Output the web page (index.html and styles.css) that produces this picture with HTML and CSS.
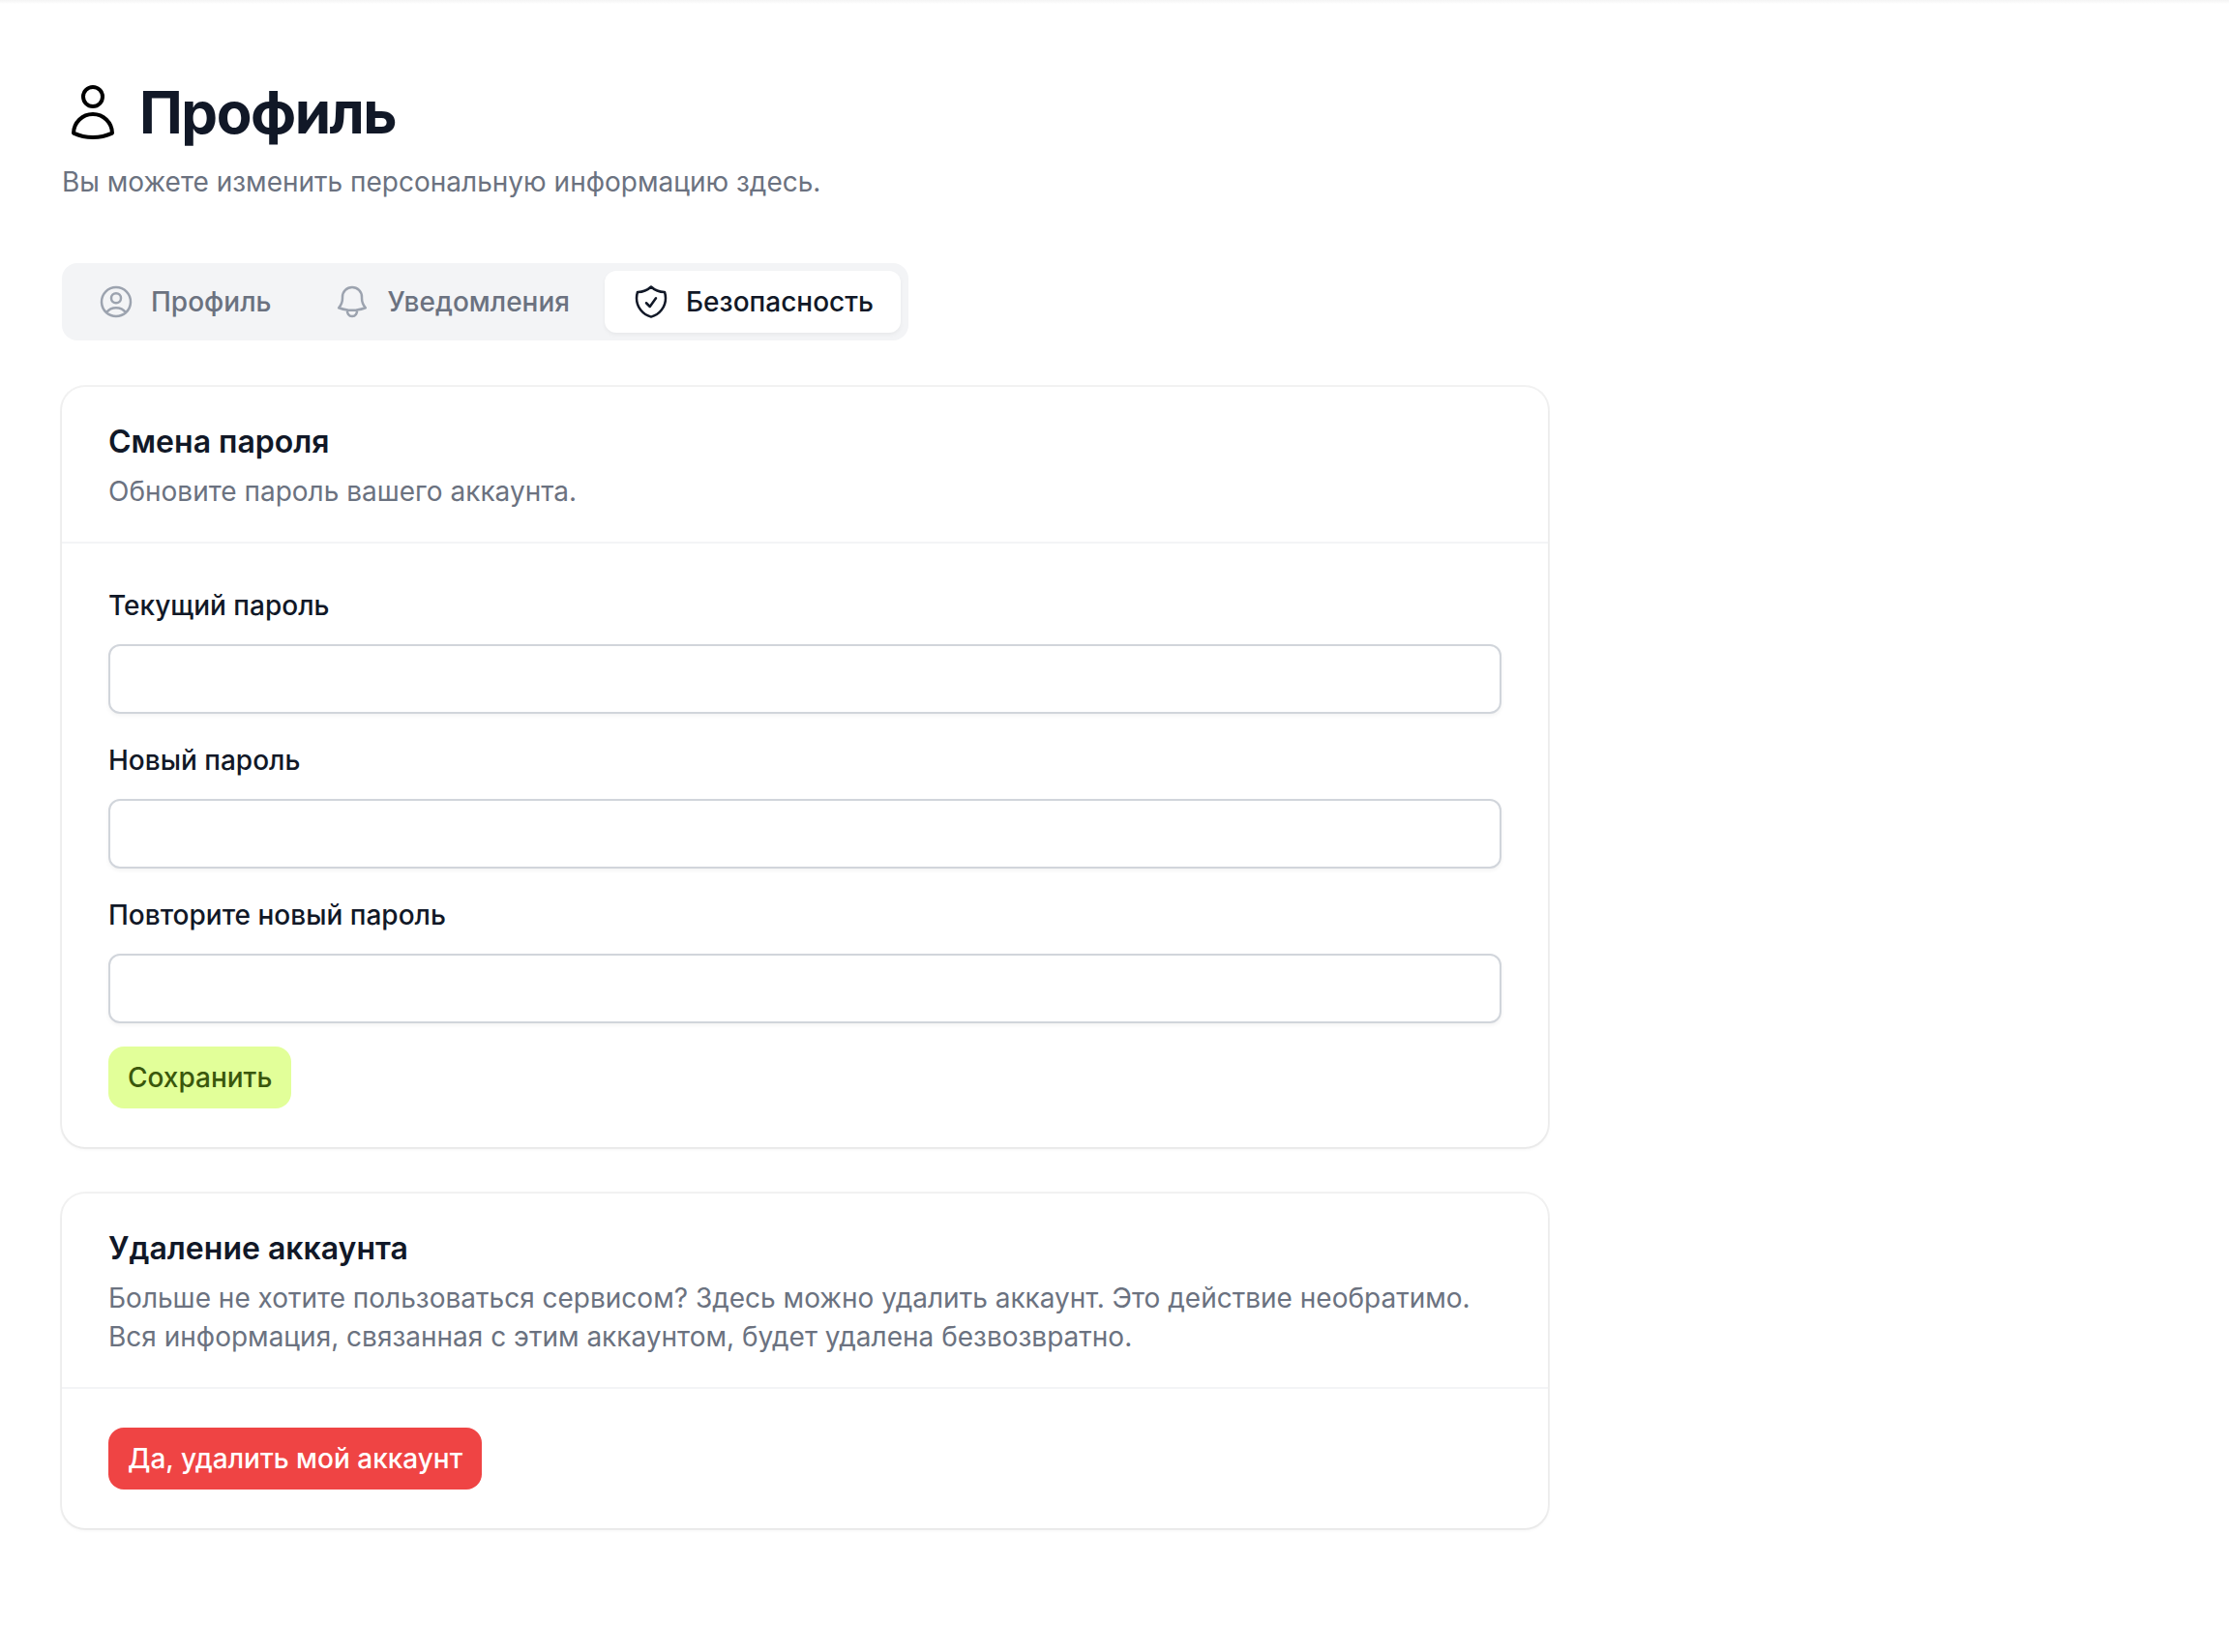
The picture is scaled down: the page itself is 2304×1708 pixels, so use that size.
FILE: index.html
```html
<!DOCTYPE html>
<html lang="ru">
<head>
  <meta charset="UTF-8" />
  <meta name="viewport" content="width=device-width, initial-scale=1.0"/>
  <title>Профиль</title>
  <link rel="stylesheet" href="styles.css">
</head>
<body>
  <div class="top-line"></div>

  <main class="page">
    <header class="page-header">
      <div class="page-title">
        <svg class="title-icon" viewBox="0 0 24 24" aria-hidden="true">
          <path d="M15.75 6a3.75 3.75 0 11-7.5 0 3.75 3.75 0 017.5 0zM4.501 20.118a7.5 7.5 0 0114.998 0A17.933 17.933 0 0112 21.75c-2.676 0-5.216-.584-7.499-1.632z"/>
        </svg>
        <h1>Профиль</h1>
      </div>
      <p class="muted">Вы можете изменить персональную информацию здесь.</p>
    </header>

    <nav class="tabs">
      <a href="#profile" class="tab">
        <svg viewBox="0 0 24 24" aria-hidden="true">
          <path d="M17.982 18.725A7.488 7.488 0 0012 15.75a7.488 7.488 0 00-5.982 2.975m11.963 0a9 9 0 10-11.963 0m11.963 0A8.966 8.966 0 0112 21a8.966 8.966 0 01-5.982-2.275M15 9.75a3 3 0 11-6 0 3 3 0 016 0z"/>
        </svg>
        <span>Профиль</span>
      </a>
      <a href="#notifications" class="tab">
        <svg viewBox="0 0 24 24" aria-hidden="true">
          <path d="M14.857 17.082a23.848 23.848 0 005.454-1.31A8.967 8.967 0 0118 9.75V9A6 6 0 006 9v.75a8.967 8.967 0 01-2.312 6.022c1.733.64 3.56 1.085 5.455 1.31m5.714 0a24.255 24.255 0 01-5.714 0m5.714 0a3 3 0 11-5.714 0"/>
        </svg>
        <span>Уведомления</span>
      </a>
      <a href="#security" class="tab active" aria-current="page">
        <svg viewBox="0 0 24 24" aria-hidden="true">
          <path d="M9 12.75L11.25 15 15 9.75m-3-7.036A11.959 11.959 0 013.598 6 11.99 11.99 0 003 9.749c0 5.592 3.824 10.29 9 11.623 5.176-1.332 9-6.03 9-11.622 0-1.31-.21-2.571-.598-3.751h-.152c-3.196 0-6.1-1.248-8.25-3.285z"/>
        </svg>
        <span>Безопасность</span>
      </a>
    </nav>

    <section class="card">
      <div class="card-header">
        <h2>Смена пароля</h2>
        <p class="muted">Обновите пароль вашего аккаунта.</p>
      </div>
      <form class="card-body">
        <div class="field">
          <label for="current-password">Текущий пароль</label>
          <input type="password" id="current-password" />
        </div>
        <div class="field">
          <label for="new-password">Новый пароль</label>
          <input type="password" id="new-password" />
        </div>
        <div class="field">
          <label for="repeat-password">Повторите новый пароль</label>
          <input type="password" id="repeat-password" />
        </div>
        <button type="submit" class="btn btn-save">Сохранить</button>
      </form>
    </section>

    <section class="card">
      <div class="card-header">
        <h2>Удаление аккаунта</h2>
        <p class="muted">Больше не хотите пользоваться сервисом? Здесь можно удалить аккаунт. Это действие необратимо. Вся информация, связанная с этим аккаунтом, будет удалена безвозвратно.</p>
      </div>
      <div class="card-body">
        <button type="button" class="btn btn-delete">Да, удалить мой аккаунт</button>
      </div>
    </section>
  </main>
</body>
</html>
```
FILE: styles.css
```css
* {
  margin: 0;
  padding: 0;
  box-sizing: border-box;
}

body {
  background-color: #fff;
  color: #111827;
  font-family: Inter, "Liberation Sans", sans-serif;
  font-size: 28px;
  line-height: 40px;
}

.top-line {
  height: 4px;
  background: linear-gradient(#f4f4f4, #fff);
}

.page {
  display: flex;
  flex-direction: column;
  align-items: flex-start;
  gap: 48px;
  max-width: 1664px;
  padding: 76px 64px;
}

.page-header {
  margin-bottom: 16px;
}

.page-title {
  display: flex;
  align-items: center;
  gap: 16px;
  height: 72px;
  margin-bottom: 16px;
}

svg {
  display: block;
  flex-shrink: 0;
  fill: none;
  stroke: currentColor;
  stroke-width: 1.5;
  stroke-linecap: round;
  stroke-linejoin: round;
}

.title-icon {
  width: 64px;
  height: 64px;
  color: #000;
}

h1 {
  font-size: 60px;
  font-weight: 700;
  line-height: 72px;
  letter-spacing: -0.025em;
}

.muted {
  color: #6b7280;
}

.tabs {
  display: flex;
  gap: 8px;
  padding: 8px;
  background-color: #f3f4f6;
  border-radius: 16px;
}

.tab {
  display: flex;
  align-items: center;
  gap: 16px;
  height: 64px;
  padding: 0 28px;
  border-radius: 12px;
  color: #6b7280;
  font-weight: 500;
  text-decoration: none;
}

.tab svg {
  width: 40px;
  height: 40px;
  color: #9ca3af;
}

.tab.active {
  background-color: #fff;
  color: #111827;
  box-shadow: 0 2px 4px rgba(0, 0, 0, 0.05);
}

.tab.active svg {
  color: #111827;
}

.card {
  width: 100%;
  border-radius: 24px;
  background-color: #fff;
  box-shadow: 0 0 0 2px rgba(0, 0, 0, 0.05), 0 2px 4px rgba(0, 0, 0, 0.05);
}

.card-header {
  padding: 32px 48px;
}

.card-header h2 {
  margin-bottom: 6px;
  font-size: 32px;
  font-weight: 600;
  line-height: 50px;
}

.card-body {
  display: flex;
  flex-direction: column;
  align-items: flex-start;
  gap: 24px;
  padding: 40px 48px;
  border-top: 2px solid #f3f4f6;
}

.field {
  width: 100%;
}

.field label {
  display: block;
  margin-bottom: 16px;
  font-weight: 500;
  line-height: 48px;
}

.field input {
  display: block;
  width: 100%;
  height: 72px;
  padding: 0 24px;
  border: 2px solid #d1d5db;
  border-radius: 12px;
  background-color: #fff;
  color: #111827;
  font: inherit;
  box-shadow: 0 2px 4px rgba(0, 0, 0, 0.05);
}

.btn {
  height: 64px;
  padding: 0 20px;
  border: none;
  border-radius: 16px;
  font: inherit;
  font-weight: 500;
  cursor: pointer;
}

.btn-save {
  background-color: #e2ff99;
  color: #3a570c;
}

.btn-delete {
  background-color: #ef4444;
  color: #fff;
}
```
